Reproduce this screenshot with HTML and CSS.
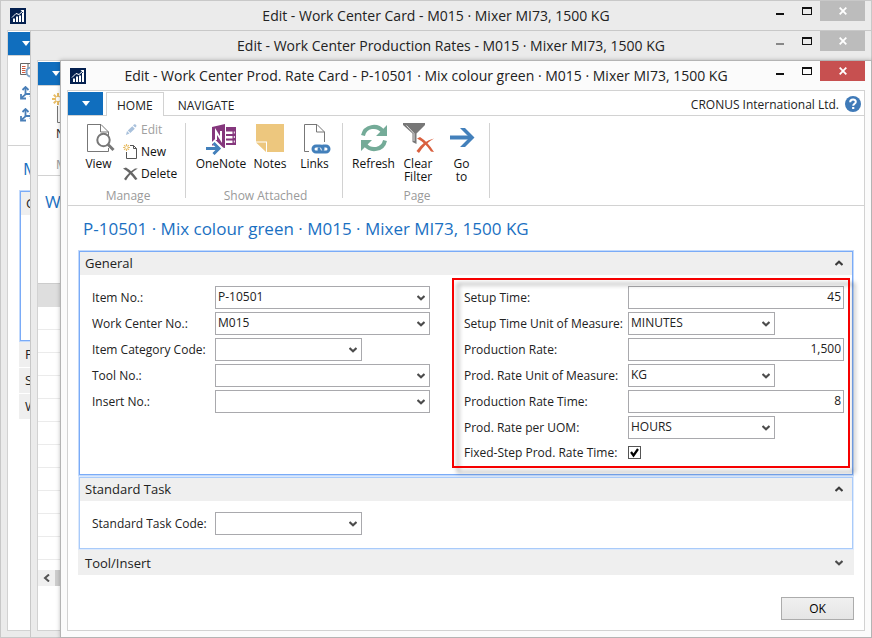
FILE: index.html
```html
<!DOCTYPE html>
<html lang="en">
<head>
<meta charset="utf-8">
<title>Work Center Prod. Rate Card</title>
<link rel="stylesheet" href="styles.css">
</head>
<body>
<svg class="defs" aria-hidden="true">
  <symbol id="app" viewBox="0 0 16 16"><path fill="#04204f" d="M0 0h16v16H0z"/><path fill="#fff" d="M3 10.500h2V14H3zM6 8.500h2V14H6zM9 7.500h2V14H9zM12 5h2v9h-2z"/><path d="M2 9.500 6 5.500l3 1L13 3" fill="none" stroke="#fff" stroke-width="1"/><path fill="#fff" d="M10.500 2H14v3.500z"/></symbol>
  <symbol id="down" viewBox="0 0 8 6"><path fill="none" stroke="#4c4c4c" stroke-width="2.200" d="M.5 1 4 4.200 7.500 1"/></symbol>
  <symbol id="up" viewBox="0 0 8 6"><path fill="none" stroke="#3c3c3c" stroke-width="2.200" d="M.5 5 4 1.800 7.500 5"/></symbol>
  <symbol id="min" viewBox="0 0 8 2"><path fill="currentColor" d="M0 0h8v2H0z"/></symbol>
  <symbol id="max" viewBox="0 0 10 8"><path fill="currentColor" fill-rule="evenodd" d="M0 0h10v8H0zM1 2v5h8V2z"/></symbol>
  <symbol id="close" viewBox="0 0 8 8"><path fill="none" stroke="#fff" stroke-width="1.800" d="M.7 .7l6.600 6.600M7.300 .7.7 7.300"/></symbol>
  <symbol id="tri" viewBox="0 0 8 5"><path fill="#fff" d="M0 0h8L4 5z"/></symbol>
  <symbol id="star" viewBox="0 0 12 12"><path stroke="#e8bd66" stroke-width="2" fill="none" d="M6 0v4M6 8v4M0 6h4M8 6h4M1.800 1.800l2.600 2.600M7.600 7.600l2.600 2.600M10.200 1.800 7.600 4.400M4.400 7.600l-2.600 2.600"/></symbol>
  <symbol id="flow" viewBox="0 0 14 14"><g fill="none" stroke="#4a7fb8" stroke-width="1.800"><path d="M5.500 1v6.500Q5.500 9 3 10.500L1.500 12M5.500 8h6"/><path d="M2.500 4l3-3 3 3M1 8v4.500h5M10 5l3 3-3 3"/></g></symbol>
</svg>
<main class="desktop">
  <section class="window back first">
    <header class="titlebar">
      <svg class="appicon"><use href="#app"/></svg>
      <h1 class="caption">Edit - Work Center Card - M015 · Mixer MI73, 1500 KG</h1>
      <div class="controls">
        <button aria-label="Minimize"><svg class="i-min"><use href="#min"/></svg></button>
        <button aria-label="Maximize"><svg class="i-max"><use href="#max"/></svg></button>
        <button class="close" aria-label="Close"><svg class="i-close"><use href="#close"/></svg></button>
      </div>
    </header>
    <div class="client">
      <div class="tabs"><button class="filemenu" aria-label="Menu"><svg class="i-tri"><use href="#tri"/></svg></button></div>
      <div class="ribbon side-icons">
        <svg width="16" height="16" viewBox="0 0 16 16"><path d="M.5 1.500h15v11H.5z" fill="#fff" stroke="#666"/><path d="M2 4.500h3.500M2 6.500h3.500M2 8.500h3.500M2 10.500h3.500" stroke="#d0593c"/><path d="M8 2v10" stroke="#666"/><circle cx="11" cy="10" r="4.500" fill="#fff" stroke="#7fa5c9" stroke-width="2"/></svg>
        <svg width="14" height="14"><use href="#flow"/></svg>
        <svg width="14" height="14"><use href="#flow"/></svg>
      </div>
      <p class="pagetitle">M</p>
      <div class="tab-list">
        <div class="stub active"><div class="bar">G</div></div>
        <div class="bar">P</div>
        <div class="bar">S</div>
        <div class="bar">W</div>
      </div>
    </div>
  </section>

  <section class="window back second">
    <header class="titlebar">
      <span></span>
      <h1 class="caption">Edit - Work Center Production Rates - M015 · Mixer MI73, 1500 KG</h1>
      <div class="controls">
        <button class="dim" aria-label="Minimize"><svg class="i-min"><use href="#min"/></svg></button>
        <button aria-label="Maximize"><svg class="i-max"><use href="#max"/></svg></button>
        <button class="close" aria-label="Close"><svg class="i-close"><use href="#close"/></svg></button>
      </div>
    </header>
    <div class="client">
      <div class="tabs"><button class="filemenu" aria-label="Menu"><svg class="i-tri"><use href="#tri"/></svg></button></div>
      <div class="ribbon new-stub">
        <svg width="20" height="32" viewBox="0 0 20 32"><path d="M5.500 13v16.500H18" fill="none" stroke="#777"/><svg width="12" height="12"><use href="#star"/></svg></svg>
        <span>N</span>
        <span class="muted">M</span>
      </div>
      <p class="pagetitle">W</p>
      <div class="grid">
        <div class="head"></div>
        <div class="lines"></div>
        <div class="scroll"><svg width="7" height="8" viewBox="0 0 7 8"><path d="M6 .5 2 4l4 3.500" fill="none" stroke="#555" stroke-width="2"/></svg><i></i></div>
      </div>
    </div>
  </section>

  <section class="window front">
    <header class="titlebar">
      <svg class="appicon"><use href="#app"/></svg>
      <h1 class="caption">Edit - Work Center Prod. Rate Card - P-10501 · Mix colour green · M015 · Mixer MI73, 1500 KG</h1>
      <div class="controls">
        <button aria-label="Minimize"><svg class="i-min"><use href="#min"/></svg></button>
        <button aria-label="Maximize"><svg class="i-max"><use href="#max"/></svg></button>
        <button class="close" aria-label="Close"><svg class="i-close"><use href="#close"/></svg></button>
      </div>
    </header>
    <div class="client">
      <nav class="tabs">
        <button class="filemenu" aria-label="Menu"><svg class="i-tri"><use href="#tri"/></svg></button>
        <button class="tab current">HOME</button>
        <button class="tab">NAVIGATE</button>
        <span class="company">CRONUS International Ltd.</span>
        <button class="help" aria-label="Help"><svg width="16" height="16" viewBox="0 0 16 16"><circle cx="8" cy="8" r="8" fill="#3f7ab8"/><path d="M5.200 6.200C5.200 2.600 11 2.700 10.800 6c-.1 1.800-2.600 1.800-2.600 3.800" fill="none" stroke="#fff" stroke-width="2"/><path fill="#fff" d="M7.100 11h2.200v2H7.100z"/></svg></button>
      </nav>
      <div class="ribbon">
        <div class="group manage">
          <div class="actions">
            <button class="big"><svg width="32" height="32" viewBox="0 0 32 32"><path d="M25.500 25v3.500h-21v-27H18l7.500 7.500v4M17.500 1.500V9h8" fill="none" stroke="#777"/><circle cx="20.500" cy="17" r="6.200" fill="#fff" stroke="#777" stroke-width="2"/><path d="M25 21.500l5.500 5.500" stroke="#777" stroke-width="3"/></svg>View</button>
            <div class="stack">
              <button class="small" disabled><svg width="16" height="16" viewBox="0 0 16 16"><path fill="#a9c1dc" d="M3 13l1-4 2.500 2.500zM4.800 8.500l4.500-4.300 2.500 2.500-4.500 4.300zM10 3.500l1-1c1.500-1 3 1 2.300 2l-1 1z"/></svg>Edit</button>
              <button class="small"><svg width="16" height="16" viewBox="0 0 16 16"><path d="M3.500 8v6.500h10v-10L10.500 1.500H7M10.500 1.500v3h3" fill="none" stroke="#555"/><svg width="7" height="7"><use href="#star"/></svg></svg>New</button>
              <button class="small"><svg width="16" height="16" viewBox="0 0 16 16"><path fill="#666" d="M0 2.500 3 1.500Q9 5 14.500 13l-2.200 1Q7 6.500 0 2.500z"/><path fill="#666" d="M14.800 2.500 12 2.500Q6 6 1 13l2 1.500Q7 7 14.800 2.500z"/></svg>Delete</button>
            </div>
          </div>
          <div class="groupname">Manage</div>
        </div>
        <div class="group attached">
          <div class="actions">
            <button class="big"><svg width="32" height="32" viewBox="0 0 32 32"><path fill="#85377d" d="M7 4l13-3v24L7 23z"/><path fill="#85377d" fill-rule="evenodd" d="M21 4h10v18H21v-2h6.500v-2.500H21v-2h6.500V13H21v-2h6.500V8.500H21zM28.800 8.500h1v2h-1zM28.800 13h1v2h-1zM28.800 17.500h1v2h-1z"/><path d="M11 17V8.500l5 8V8" fill="none" stroke="#fff" stroke-width="2"/><path d="M0 25h13M8 18l7 7-7 7" fill="none" stroke="#fff" stroke-width="5"/><path d="M1 25.500h13M8.500 20l5.500 5.500L8.500 31" fill="none" stroke="#4380bb" stroke-width="3"/></svg>OneNote</button>
            <button class="big"><svg width="32" height="32" viewBox="0 0 32 32"><path fill="#edc77e" d="M2 1h28v28H13V18.500H2zM2 19.500h10V29z"/></svg>Notes</button>
            <button class="big"><svg width="32" height="32" viewBox="0 0 32 32"><path d="M10 28.500H5.500v-27H18l7.500 7.500v10M17.500 1.500V9h8" fill="none" stroke="#777"/><g fill="none" stroke="#4380bb" stroke-width="3" stroke-linecap="round"><path d="M20 29h-3a3 3 0 0 1 0-6h4q3 0 3 3M24 23h3a3 3 0 0 1 0 6h-4q-3 0-3-3"/></g></svg>Links</button>
          </div>
          <div class="groupname">Show Attached</div>
        </div>
        <div class="group page">
          <div class="actions">
            <button class="big"><svg width="32" height="32" viewBox="0 0 32 32"><g fill="none" stroke="#74ab98" stroke-width="4"><path d="M5 12.500C7 3 19 1 25 8.500"/><path d="M27 17.500C25 27 13 29 7 21.500"/></g><path fill="#74ab98" d="M29 2v11H18zM3 28V17h11z"/></svg>Refresh</button>
            <button class="big"><svg width="32" height="32" viewBox="0 0 32 32"><path fill="#777" d="M1 0h22v2l-8.500 8.500V21l-4-2v-8.500L1 2z"/><path d="M4.500 2.500l7.500 8v7.500" fill="none" stroke="#e4e4e4"/><path fill="#d9603f" d="M15 15.500l3-1.500q8 5 14 15l-3-.5Q23 19.500 15 15.500z"/><path fill="#d9603f" d="M32 15.500q-9 5-15 14.500l-2.500-2Q21 18 32 15.500z"/></svg>Clear<br>Filter</button>
            <button class="big"><svg width="32" height="32" viewBox="0 0 32 32"><path d="M4 14.500h22" stroke="#4380bb" stroke-width="4"/><path fill="#4380bb" d="M14 5h5l9.500 9.500L19 24h-5l9.500-9.500z"/></svg>Go<br>to</button>
          </div>
          <div class="groupname">Page</div>
        </div>
      </div>

      <div class="content">
        <h2 class="pagetitle">P-10501 · Mix colour green · M015 · Mixer MI73, 1500 KG</h2>
        <form class="fasttabs">
          <section class="panel active">
            <h3 class="bar">General<svg class="i-chev"><use href="#up"/></svg></h3>
            <div class="columns">
              <div class="fields">
                <div class="row"><label for="item">Item No.:</label><div class="combo"><select id="item"><option>P-10501</option></select><svg class="i-chev"><use href="#down"/></svg></div></div>
                <div class="row"><label for="wc">Work Center No.:</label><div class="combo"><select id="wc"><option>M015</option></select><svg class="i-chev"><use href="#down"/></svg></div></div>
                <div class="row"><label for="cat">Item Category Code:</label><div class="combo short"><select id="cat"><option></option></select><svg class="i-chev"><use href="#down"/></svg></div></div>
                <div class="row"><label for="tool">Tool No.:</label><div class="combo"><select id="tool"><option></option></select><svg class="i-chev"><use href="#down"/></svg></div></div>
                <div class="row"><label for="insert">Insert No.:</label><div class="combo"><select id="insert"><option></option></select><svg class="i-chev"><use href="#down"/></svg></div></div>
              </div>
              <div class="fields marked">
                <div class="row"><label for="setup">Setup Time:</label><input class="num" id="setup" type="text" value="45"></div>
                <div class="row"><label for="setupu">Setup Time Unit of Measure:</label><div class="combo short"><select id="setupu"><option>MINUTES</option></select><svg class="i-chev"><use href="#down"/></svg></div></div>
                <div class="row"><label for="rate">Production Rate:</label><input class="num" id="rate" type="text" value="1,500"></div>
                <div class="row"><label for="rateu">Prod. Rate Unit of Measure:</label><div class="combo short"><select id="rateu"><option>KG</option></select><svg class="i-chev"><use href="#down"/></svg></div></div>
                <div class="row"><label for="time">Production Rate Time:</label><input class="num" id="time" type="text" value="8"></div>
                <div class="row"><label for="uom">Prod. Rate per UOM:</label><div class="combo short"><select id="uom"><option>HOURS</option></select><svg class="i-chev"><use href="#down"/></svg></div></div>
                <div class="row tick"><label for="fixed">Fixed-Step Prod. Rate Time:</label><span class="check"><input id="fixed" type="checkbox" checked><svg viewBox="0 0 13 13"><path d="M3 6l2.500 3.500L10 3" fill="none" stroke="#000" stroke-width="2.200"/></svg></span></div>
              </div>
            </div>
          </section>
          <section class="panel">
            <h3 class="bar">Standard Task<svg class="i-chev"><use href="#up"/></svg></h3>
            <div class="columns">
              <div class="fields">
                <div class="row"><label for="std">Standard Task Code:</label><div class="combo short"><select id="std"><option></option></select><svg class="i-chev"><use href="#down"/></svg></div></div>
              </div>
            </div>
          </section>
          <h3 class="bar closed">Tool/Insert<svg class="i-chev"><use href="#down"/></svg></h3>
          <button class="ok" type="button">OK</button>
        </form>
      </div>
    </div>
  </section>
</main>
</body>
</html>
```
FILE: styles.css
```css
* { box-sizing: border-box; }
body {
  margin: 0;
  font: 12px/16px "Open Sans", "Noto Sans", sans-serif;
  color: #222;
  background: #ebebeb;
}
h1, h2, h3, p { margin: 0; font-weight: 400; }
button { font: inherit; color: inherit; background: none; border: 0; padding: 0; }
svg { display: block; flex: none; }
.defs { position: absolute; width: 0; height: 0; }

/* Overlapping windows */
.desktop { position: relative; height: 100vh; overflow: hidden; }
.window {
  position: absolute;
  right: 0;
  bottom: 0;
  display: flex;
  flex-direction: column;
  padding: 0 6px 6px;
  border: 1px solid #c8c8c8;
  background: #ebebeb;
  overflow: hidden;
}
.first { top: 0; left: 0; }
.second { top: 30px; left: 30px; }
.front { top: 60px; left: 60px; background: #fbfbfb; border-color: #b4b4b4; box-shadow: 0 0 4px rgba(0, 0, 0, .25); }
.titlebar {
  flex: none;
  display: grid;
  grid-template-columns: 1fr auto 1fr;
  align-items: center;
  height: 29px;
}
.front .titlebar { grid-template-columns: auto 1fr auto; }
.appicon { width: 16px; height: 16px; margin-left: 3px; }
.caption { font-size: 14px; line-height: 20px; white-space: nowrap; text-align: center; }
.controls { display: flex; justify-self: end; align-self: start; height: 20px; }
.controls button { display: flex; align-items: center; justify-content: center; width: 27px; color: #111; }
.controls .dim { color: #888; }
.controls .close { width: 45px; background: #bcbcbc; }
.front .close { background: #c75050; }
.i-min { width: 8px; height: 2px; margin-top: 6px; }
.i-max { width: 10px; height: 8px; }
.i-close { width: 8px; height: 8px; }
.i-tri { width: 8px; height: 5px; }
.i-chev { width: 8px; height: 6px; }
.client {
  flex: 1;
  min-height: 0;
  display: flex;
  flex-direction: column;
  border: 1px solid #d2d2d2;
  background: #fff;
}

/* Ribbon */
.tabs { flex: none; display: flex; height: 25px; padding-top: 1px; border-bottom: 1px solid #d2d2d2; }
.filemenu { display: flex; align-items: center; justify-content: center; width: 35px; background: #106ebe; margin-right: 3px; }
.tab { height: 24px; padding: 2px 10px 0; margin-right: 3px; border: 1px solid transparent; border-bottom: 0; }
.tab.current { background: #fff; border-color: #d2d2d2; }
.company { margin: 5px 6px 0 auto; }
.help { display: flex; align-items: center; margin-right: 3px; }
.ribbon { flex: none; display: flex; height: 90px; padding: 7px 0; border-bottom: 1px solid #d2d2d2; }
.group { display: flex; flex-direction: column; justify-content: space-between; border-right: 1px solid #d2d2d2; }
.manage { width: 118px; padding: 0 6px 0 9px; }
.attached { width: 157px; padding: 0 5px 0 8px; }
.page { width: 147px; padding: 0 4px 0 6px; }
.actions { display: grid; justify-content: start; align-items: start; }
.manage .actions { grid-template-columns: 43px auto; column-gap: 3px; }
.attached .actions { grid-template-columns: 54px 44px 45px; }
.page .actions { grid-template-columns: 49px 40px 47px; }
.big { display: flex; flex-direction: column; align-items: center; line-height: 13px; color: #111; }
.big svg { margin-bottom: 2px; }
.stack { display: flex; flex-direction: column; margin-top: -4px; }
.small { display: flex; align-items: center; gap: 2px; height: 22px; line-height: 16px; color: #111; }
.small:disabled { color: #a0a0a0; }
.groupname { height: 5px; color: #9a9a9a; text-align: center; line-height: 5px; }

/* Card */
.content { padding: 11px 10px 9px; flex: 1; }
.pagetitle { font-size: 17px; line-height: 24px; color: #1a70c2; }
.content .pagetitle { padding-left: 5px; }
.fasttabs { display: flex; flex-direction: column; margin-top: 9px; }
.panel { border: 1px solid #a9cbfa; outline: 1px solid #dce9fc; margin: 1px; }
.panel.active { border-color: #7aabf7; outline-color: #c3dafc; }
.bar {
  display: flex;
  align-items: center;
  justify-content: space-between;
  height: 23px;
  padding: 0 9px 2px 5px;
  font-size: 13px;
  background: #efefef;
}
.bar.closed { height: 25px; padding: 0 11px 0 7px; }
.columns { display: grid; grid-template-columns: 338fr 380fr; gap: 34px; padding: 11px 8px 13px 12px; }
.active .columns { padding-bottom: 11px; }
.fields { display: flex; flex-direction: column; gap: 3px; }
.row { display: grid; grid-template-columns: 123px 1fr; align-items: center; height: 23px; }
.row.tick { height: 21px; }
.row label { white-space: nowrap; }
.marked { position: relative; }
.marked .row { grid-template-columns: 164px 1fr; }
.marked::after {
  content: "";
  position: absolute;
  inset: -8px -6px -5px -12px;
  border: 2px solid #f60000;
  filter: drop-shadow(5px 5px 2px rgba(0, 0, 0, .35));
  pointer-events: none;
}
.combo { display: grid; align-items: center; }
.combo > * { grid-area: 1 / 1; }
.combo .i-chev { justify-self: end; margin-right: 5px; pointer-events: none; }
.short { width: 147px; }
select, .num {
  appearance: none;
  width: 100%;
  height: 23px;
  margin: 0;
  padding: 0 2px 2px;
  border: 1px solid #a9a9ad;
  border-radius: 0;
  background: #fff;
  font: inherit;
  color: #222;
}
.num { text-align: right; }
.check { display: grid; width: 13px; height: 13px; }
.check > * { grid-area: 1 / 1; }
.check svg { pointer-events: none; }
.check input { appearance: none; width: 13px; height: 13px; margin: 0; border: 1px solid #555; background: #fff; }
.ok { align-self: flex-end; width: 73px; height: 23px; margin-top: 22px; border: 1px solid #acacac; background: linear-gradient(#f0f0f0, #e5e5e5); color: #000; }

/* Visible strips of the windows behind */
.back .client > .pagetitle { height: 24px; }
.first .side-icons { flex-direction: column; gap: 8px; padding: 6px 0 0 12px; }
.first .pagetitle { margin: 11px 0 0 15px; }
.tab-list { display: flex; flex-direction: column; gap: 1px; padding-left: 11px; margin-top: 9px; }
.tab-list .bar { height: 25px; padding-left: 6px; }
.tab-list .stub { height: 150px; margin: 1px 0 0 1px; border: 1px solid #7aabf7; outline: 1px solid #c3dafc; }
.tab-list .stub .bar { height: 23px; padding-left: 5px; }
.new-stub { flex-direction: column; padding-left: 14px; }
.new-stub span { padding-left: 4px; margin-top: 1px; }
.new-stub .muted { color: #9a9a9a; margin-top: 15px; }
.second .pagetitle { margin: 14px 0 0 7px; }
.grid { margin-top: 69px; }
.head { height: 24px; background: #dedede; border-top: 1px solid #ccc; }
.lines { height: 263px; background: repeating-linear-gradient(#fff 0 22px, #ebebeb 22px 23px); }
.scroll { display: flex; align-items: center; height: 16px; padding-left: 5px; background: #f0f0f0; }
.scroll i { width: 200px; height: 16px; margin-left: 5px; background: #cdcdcd; }
```
